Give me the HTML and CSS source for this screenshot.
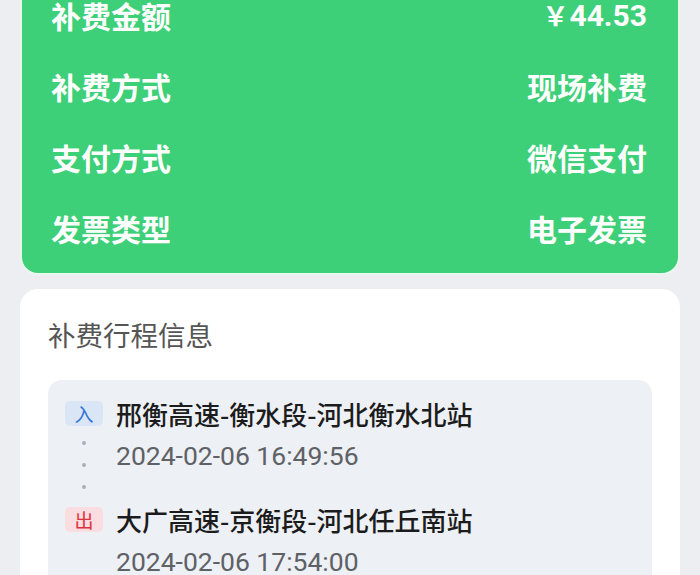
FILE: index.html
```html
<!DOCTYPE html>
<html lang="zh-CN">
<head>
<meta charset="utf-8">
<link rel="stylesheet" href="styles.css">
</head>
<body>
<div class="page">
  <section class="summary">
    <div class="row"><span class="label">补费金额</span><span class="value"><span class="yen">￥</span><span class="num">44.53</span></span></div>
    <div class="row"><span class="label">补费方式</span><span class="value">现场补费</span></div>
    <div class="row"><span class="label">支付方式</span><span class="value">微信支付</span></div>
    <div class="row"><span class="label">发票类型</span><span class="value">电子发票</span></div>
  </section>
  <section class="trip">
    <h2 class="trip-title">补费行程信息</h2>
    <div class="route">
      <div class="stop">
        <div class="marker">
          <span class="badge in">入</span>
          <div class="dots"><i></i><i></i><i></i></div>
        </div>
        <div class="info">
          <div class="station">邢衡高速-衡水段-河北衡水北站</div>
          <div class="time">2024-02-06 16:49:56</div>
        </div>
      </div>
      <div class="stop">
        <div class="marker">
          <span class="badge out">出</span>
        </div>
        <div class="info">
          <div class="station">大广高速-京衡段-河北任丘南站</div>
          <div class="time">2024-02-06 17:54:00</div>
        </div>
      </div>
    </div>
  </section>
</div>
</body>
</html>
```

FILE: styles.css
```css
html, body {
  margin: 0;
  padding: 0;
  background: #eceef1;
  font-family: "Noto Sans CJK SC", "Noto Sans", sans-serif;
  overflow: hidden;
}
.page {
  padding: 0 20px;
  display: flex;
  flex-direction: column;
  gap: 14px;
}
.summary {
  margin-top: -36px;
  background: #3ecf79;
  border: 2px solid #e9f8ef;
  border-radius: 18px;
  padding: 13px 31px 10px 29px;
  color: #fff;
}
.row {
  height: 71px;
  display: flex;
  align-items: center;
  justify-content: space-between;
  font-size: 30px;
  font-weight: 700;
}
.value {
  display: flex;
  align-items: baseline;
}
.yen {
  font-size: 26px;
  margin-right: 1px;
}
.num {
  font-family: "Roboto", "Noto Sans", sans-serif;
  font-size: 30px;
}
.trip {
  background: #fff;
  border-radius: 18px;
  padding: 24px 28px 30px 28px;
}
.trip-title {
  margin: 0;
  font-size: 27.5px;
  font-weight: 400;
  color: #555;
  line-height: 42px;
}
.route {
  margin-top: 25px;
  background: #edf0f4;
  border-radius: 14px;
  padding: 17px 17px 20px;
  display: flex;
  flex-direction: column;
  gap: 14px;
}
.stop {
  display: flex;
  gap: 13px;
}
.marker {
  width: 38px;
  display: flex;
  flex-direction: column;
  align-items: center;
  padding-top: 4px;
}
.badge {
  width: 38px;
  height: 25px;
  border-radius: 5px;
  display: flex;
  align-items: center;
  justify-content: center;
  font-size: 19px;
  line-height: 1;
}
.badge.in {
  background: #dae6f6;
  color: #2f74d6;
}
.badge.out {
  background: #f9dde1;
  color: #e0323e;
}
.dots {
  margin-top: 15px;
  display: flex;
  flex-direction: column;
  gap: 18px;
}
.dots i {
  display: block;
  width: 4px;
  height: 4px;
  border-radius: 50%;
  background: #a9afb7;
}
.info {
  display: flex;
  flex-direction: column;
  gap: 8px;
}
.station {
  font-size: 26px;
  line-height: 34px;
  font-weight: 500;
  color: #1c1c1c;
}
.time {
  font-family: "Roboto", "Noto Sans", sans-serif;
  font-size: 26.5px;
  line-height: 34px;
  color: #5e6166;
}
```
